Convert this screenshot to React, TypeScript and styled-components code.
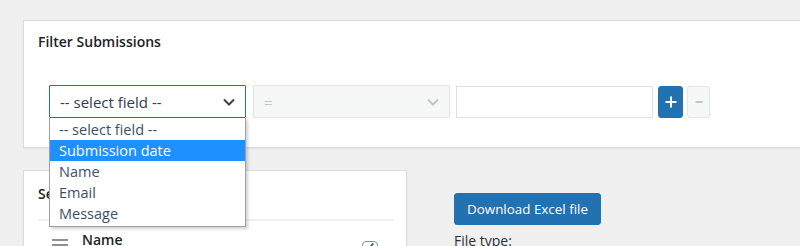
import React from 'react';
import styled, { createGlobalStyle } from 'styled-components';

const GlobalStyle = createGlobalStyle`
	body {
		margin: 0;
		background: #f0f0f1;
		overflow: hidden;
		font-family: 'Open Sans', 'Noto Sans', sans-serif;
		color: #1d2327;
	}
`;

const Page = styled.div`
	padding: 20px 0 0 23px;
	width: 800px;
	box-sizing: border-box;
`;

const Panel = styled.div`
	background: #fff;
	border: 1px solid #dcdcde;
	box-shadow: 0 1px 2px rgba(0, 0, 0, 0.06);
	box-sizing: border-box;
`;

const FilterPanel = styled(Panel)`
	margin-right: -12px;
	padding: 11px 14px 29px;
`;

const PanelTitle = styled.h2`
	margin: 0;
	font-size: 14px;
	font-weight: 600;
	line-height: 20px;
`;

const FilterRow = styled.div`
	display: flex;
	align-items: center;
	margin: 33px 0 0 11px;
`;

const SelectWrap = styled.div`
	position: relative;
	margin-right: 7px;
`;

const SelectBox = styled.div<{ $focused?: boolean; $disabled?: boolean }>`
	width: 197px;
	height: 33px;
	box-sizing: border-box;
	display: flex;
	align-items: center;
	justify-content: space-between;
	padding: 0 7px 0 10px;
	border: 1px solid ${(p) => (p.$focused ? '#2271b1' : '#e4e4e6')};
	background: ${(p) => (p.$disabled ? '#f6f7f7' : '#fff')};
	color: ${(p) => (p.$disabled ? '#c3c4c7' : '#2c3e50')};
	font-size: 15px;
	border-radius: 1px;
`;

const TextInput = styled.div`
	width: 197px;
	height: 32px;
	box-sizing: border-box;
	border: 1px solid #e0e0e2;
	background: #fff;
	margin: 0 5px 0 -1px;
`;

const IconButton = styled.button<{ $primary?: boolean }>`
	width: ${(p) => (p.$primary ? '25px' : '23px')};
	height: 32px;
	padding: 0;
	display: flex;
	align-items: center;
	justify-content: center;
	border-radius: 3px;
	border: 1px solid ${(p) => (p.$primary ? '#2271b1' : '#e4e4e6')};
	background: ${(p) => (p.$primary ? '#2271b1' : '#f6f7f7')};
	margin-right: 4px;
`;

const Dropdown = styled.ul`
	position: absolute;
	left: 0;
	top: 33px;
	width: 197px;
	box-sizing: border-box;
	margin: 0;
	padding: 1px 0 2px;
	list-style: none;
	background: #fff;
	border: 1px solid #a0a0a0;
	border-top: none;
	box-shadow: 2px 2px 3px rgba(0, 0, 0, 0.18);
	z-index: 10;
`;

const Option = styled.li<{ $active?: boolean }>`
	height: 21px;
	line-height: 21px;
	padding-left: 9px;
	font-size: 14.5px;
	background: ${(p) => (p.$active ? '#1e90ff' : 'transparent')};
	color: ${(p) => (p.$active ? '#fff' : '#3b5068')};
`;

const LowerRow = styled.div`
	display: flex;
	align-items: flex-start;
	margin-top: 22px;
	gap: 47px;
`;

const FieldsPanel = styled(Panel)`
	width: 384px;
	height: 120px;
	padding: 13px 12px 0 14px;
`;

const Divider = styled.hr`
	border: none;
	border-top: 2px solid #f0f0f1;
	margin: 15px 0 0;
`;

const FieldRow = styled.div`
	display: flex;
	align-items: flex-start;
	padding: 10px 0 0 14px;
`;

const Handle = styled.div`
	width: 16px;
	display: flex;
	flex-direction: column;
	gap: 3px;
	margin-top: 8px;
	span {
		display: block;
		height: 2px;
		background: #8c8f94;
	}
`;

const FieldName = styled.div`
	margin-left: 14px;
	font-size: 14px;
	font-weight: 600;
	line-height: 18px;
	flex: 1;
`;

const Checkbox = styled.div`
	width: 16px;
	height: 16px;
	box-sizing: border-box;
	border: 1px solid #8c8f94;
	border-radius: 4px;
	margin: 10px 16px 0 0;
	position: relative;
	&::after {
		content: '';
		position: absolute;
		left: 8px;
		top: 1px;
		width: 2px;
		height: 4px;
		background: #2271b1;
		transform: rotate(35deg);
	}
`;

const ExportColumn = styled.div`
	padding-top: 23px;
`;

const PrimaryButton = styled.button`
	height: 32px;
	padding: 0 12px;
	background: #2271b1;
	color: #fff;
	border: 1px solid #2271b1;
	border-radius: 3px;
	font-family: inherit;
	font-size: 13.4px;
`;

const Label = styled.div`
	margin-top: 6px;
	font-size: 14px;
	color: #2c3338;
`;

const Chevron: React.FC<{ color: string }> = ({ color }) => (
	<svg width='18' height='18' viewBox='0 0 18 18'>
		<path d='M4 6.5 L9 11.5 L14 6.5' fill='none' stroke={color} strokeWidth='2' />
	</svg>
);

const fields = ['-- select field --', 'Submission date', 'Name', 'Email', 'Message'];

const App: React.FC = () => (
	<>
		<GlobalStyle />
		<Page>
			<FilterPanel>
				<PanelTitle>Filter Submissions</PanelTitle>
				<FilterRow>
					<SelectWrap>
						<SelectBox $focused>
							<span>-- select field --</span>
							<Chevron color='#3c434a' />
						</SelectBox>
						<Dropdown>
							{fields.map((f) => (
								<Option key={f} $active={f === 'Submission date'}>
									{f}
								</Option>
							))}
						</Dropdown>
					</SelectWrap>
					<SelectWrap>
						<SelectBox $disabled>
							<span>=</span>
							<Chevron color='#c3c4c7' />
						</SelectBox>
					</SelectWrap>
					<TextInput />
					<IconButton $primary>
						<svg width='14' height='14' viewBox='0 0 14 14'>
							<path d='M7 1.5 V12.5 M1.5 7 H12.5' stroke='#fff' strokeWidth='2' />
						</svg>
					</IconButton>
					<IconButton>
						<svg width='10' height='10' viewBox='0 0 10 10'>
							<path d='M1.5 5 H8.5' stroke='#a7aaad' strokeWidth='1.3' />
						</svg>
					</IconButton>
				</FilterRow>
			</FilterPanel>
			<LowerRow>
				<FieldsPanel>
					<PanelTitle>Select fields</PanelTitle>
					<Divider />
					<FieldRow>
						<Handle>
							<span />
							<span />
							<span />
						</Handle>
						<FieldName>Name</FieldName>
						<Checkbox />
					</FieldRow>
				</FieldsPanel>
				<ExportColumn>
					<PrimaryButton>Download Excel file</PrimaryButton>
					<Label>File type:</Label>
				</ExportColumn>
			</LowerRow>
		</Page>
	</>
);

export default App;
